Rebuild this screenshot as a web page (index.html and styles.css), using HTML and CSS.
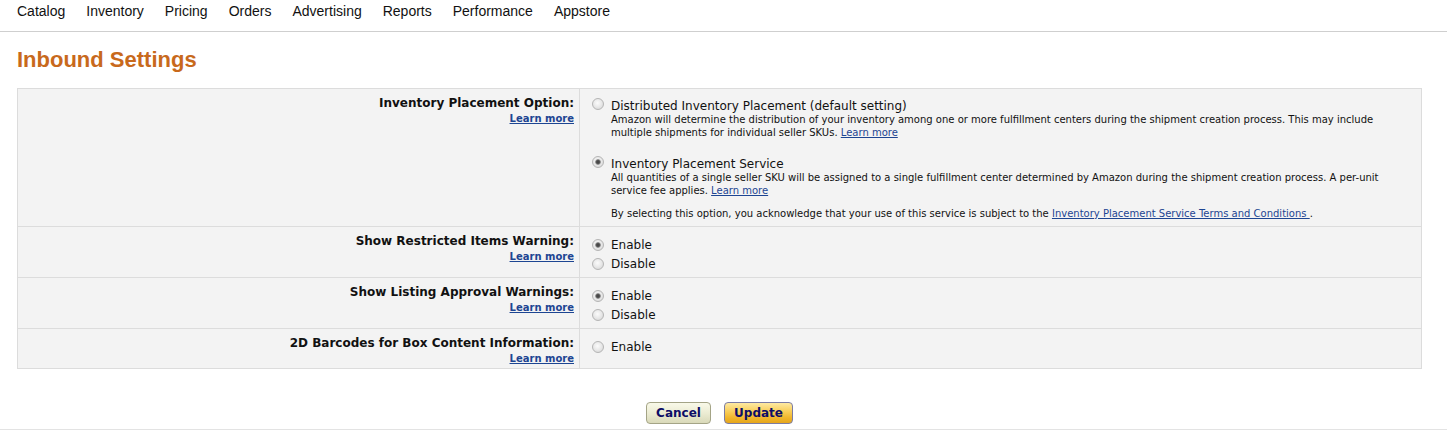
FILE: index.html
```html
<!DOCTYPE html>
<html lang="en">
<head>
<meta charset="utf-8">
<title>Inbound Settings</title>
<link rel="stylesheet" href="styles.css">
</head>
<body>
<nav class="topnav">
  <a class="nav-item">Catalog</a>
  <a class="nav-item">Inventory</a>
  <a class="nav-item">Pricing</a>
  <a class="nav-item">Orders</a>
  <a class="nav-item">Advertising</a>
  <a class="nav-item">Reports</a>
  <a class="nav-item">Performance</a>
  <a class="nav-item">Appstore</a>
</nav>

<h1 class="page-title">Inbound Settings</h1>

<div class="settings">
  <div class="row row-placement">
    <div class="label-cell">
      <div class="label">Inventory Placement Option:</div>
      <a class="learn">Learn more</a>
    </div>
    <div class="value-cell">
      <label class="opt">
        <input class="radio" type="radio" name="placement">
        <span class="opt-body">
          <span class="opt-title">Distributed Inventory Placement (default setting)</span>
          <span class="opt-desc">Amazon will determine the distribution of your inventory among one or more fulfillment centers during the shipment creation process. This may include multiple shipments for individual seller SKUs. <a class="link">Learn more</a></span>
        </span>
      </label>
      <label class="opt opt-second">
        <input class="radio" type="radio" name="placement" checked>
        <span class="opt-body">
          <span class="opt-title">Inventory Placement Service</span>
          <span class="opt-desc">All quantities of a single seller SKU will be assigned to a single fulfillment center determined by Amazon during the shipment creation process. A <span class="nowrap">per-unit</span> service fee applies. <a class="link">Learn more</a></span>
          <span class="opt-note">By selecting this option, you acknowledge that your use of this service is subject to the <a class="link">Inventory Placement Service Terms and Conditions </a>.</span>
        </span>
      </label>
    </div>
  </div>

  <div class="row row-two">
    <div class="label-cell">
      <div class="label">Show Restricted Items Warning:</div>
      <a class="learn">Learn more</a>
    </div>
    <div class="value-cell">
      <label class="choice"><input class="radio" type="radio" name="restricted" checked><span>Enable</span></label>
      <label class="choice"><input class="radio" type="radio" name="restricted"><span>Disable</span></label>
    </div>
  </div>

  <div class="row row-two">
    <div class="label-cell">
      <div class="label">Show Listing Approval Warnings:</div>
      <a class="learn">Learn more</a>
    </div>
    <div class="value-cell">
      <label class="choice"><input class="radio" type="radio" name="approval" checked><span>Enable</span></label>
      <label class="choice"><input class="radio" type="radio" name="approval"><span>Disable</span></label>
    </div>
  </div>

  <div class="row row-one">
    <div class="label-cell">
      <div class="label">2D Barcodes for Box Content Information:</div>
      <a class="learn">Learn more</a>
    </div>
    <div class="value-cell">
      <label class="choice"><input class="radio" type="radio" name="barcodes"><span>Enable</span></label>
    </div>
  </div>
</div>

<div class="actions">
  <button class="btn btn-cancel" type="button">Cancel</button>
  <button class="btn btn-update" type="button">Update</button>
</div>
<div class="footer-line"></div>
</body>
</html>
```

FILE: styles.css
```css
html, body {
  margin: 0;
  padding: 0;
  background: #fff;
}

body {
  font-family: "DejaVu Sans", Verdana, sans-serif;
  color: #111;
}

/* top navigation */
.topnav {
  display: flex;
  gap: 21px;
  height: 32px;
  box-sizing: border-box;
  padding: 3px 0 0 17px;
  border-bottom: 1px solid #cfcfcf;
  font-family: "Liberation Sans", Arial, sans-serif;
  font-size: 14px;
  line-height: 16px;
}

.nav-item {
  color: #111;
  text-decoration: none;
}

.page-title {
  margin: 15px 0 15px 17px;
  font-family: "Liberation Sans", Arial, sans-serif;
  font-weight: bold;
  font-size: 22px;
  line-height: 26px;
  color: #c8691c;
}

/* settings table */
.settings {
  margin: 0 25px 0 17px;
  border: 1px solid #dcdcdc;
  background: #f3f3f3;
}

.row {
  display: grid;
  grid-template-columns: 562px 1fr;
  border-top: 1px solid #dcdcdc;
}

.row:first-child {
  border-top: 0;
}

.row-placement { min-height: 137px; }
.row-two { min-height: 50px; }
.row-one { min-height: 39px; }

.label-cell {
  border-right: 1px solid #dcdcdc;
  text-align: right;
  padding: 5px 5px 0 0;
}

.label {
  font-weight: bold;
  font-size: 12px;
  line-height: 18px;
  color: #111;
}

.learn {
  display: block;
  font-weight: bold;
  font-size: 10px;
  line-height: 13px;
  color: #1d4592;
  text-decoration: underline;
}

.value-cell {
  padding: 9px 15px 5px 0;
}

.row-two .value-cell,
.row-one .value-cell {
  padding-top: 8px;
  padding-bottom: 0;
}

/* radios */
.radio {
  appearance: none;
  -webkit-appearance: none;
  flex: none;
  width: 12px;
  height: 12px;
  margin: 0 7px 0 12px;
  border: 1px solid #b5b5b5;
  border-radius: 50%;
  box-sizing: border-box;
  background: radial-gradient(circle at 45% 40%, #fbfbfb 0, #eaeaea 45%, #d2d2d2 100%);
}

.radio:checked {
  background:
    radial-gradient(circle at 50% 50%, #3c3c3c 0, #555 1.6px, #8a8a8a 2.4px, rgba(140,140,140,0) 3.2px),
    radial-gradient(circle at 45% 40%, #fbfbfb 0, #eaeaea 45%, #d2d2d2 100%);
}

.opt {
  display: flex;
  align-items: flex-start;
}

.opt-second {
  margin-top: 17px;
}

.opt-body {
  display: flex;
  flex-direction: column;
}

.opt-title {
  font-size: 12px;
  line-height: 16px;
  color: #111;
}

.opt-desc,
.opt-note {
  font-size: 10px;
  line-height: 12.5px;
  color: #111;
}

.opt-note {
  margin-top: 11px;
}

.nowrap {
  white-space: nowrap;
}

.link {
  color: #1d4592;
  text-decoration: underline;
}

.choice {
  display: flex;
  align-items: center;
  height: 19px;
  font-size: 12px;
  color: #111;
}

/* buttons */
.actions {
  display: flex;
  justify-content: center;
  gap: 13px;
  margin: 33px 25px 0 17px;
}

.btn {
  height: 22px;
  box-sizing: border-box;
  padding: 0;
  border-radius: 4px;
  font-family: "DejaVu Sans", Verdana, sans-serif;
  font-weight: bold;
  font-size: 12px;
  line-height: 18px;
  color: #0d0d66;
  cursor: pointer;
}

.btn-cancel {
  width: 65px;
  border: 1px solid #a4a486;
  background: linear-gradient(#f9f9e9 0%, #ececd3 50%, #d9d9b9 100%);
}

.btn-update {
  width: 69px;
  border: 1px solid #7c7ca2;
  background: linear-gradient(#fde9a2 0%, #f8cc55 45%, #f0b52a 75%, #e5a61c 100%);
}

.footer-line {
  margin-top: 5px;
  border-top: 1px solid #e3e3e3;
}
```
